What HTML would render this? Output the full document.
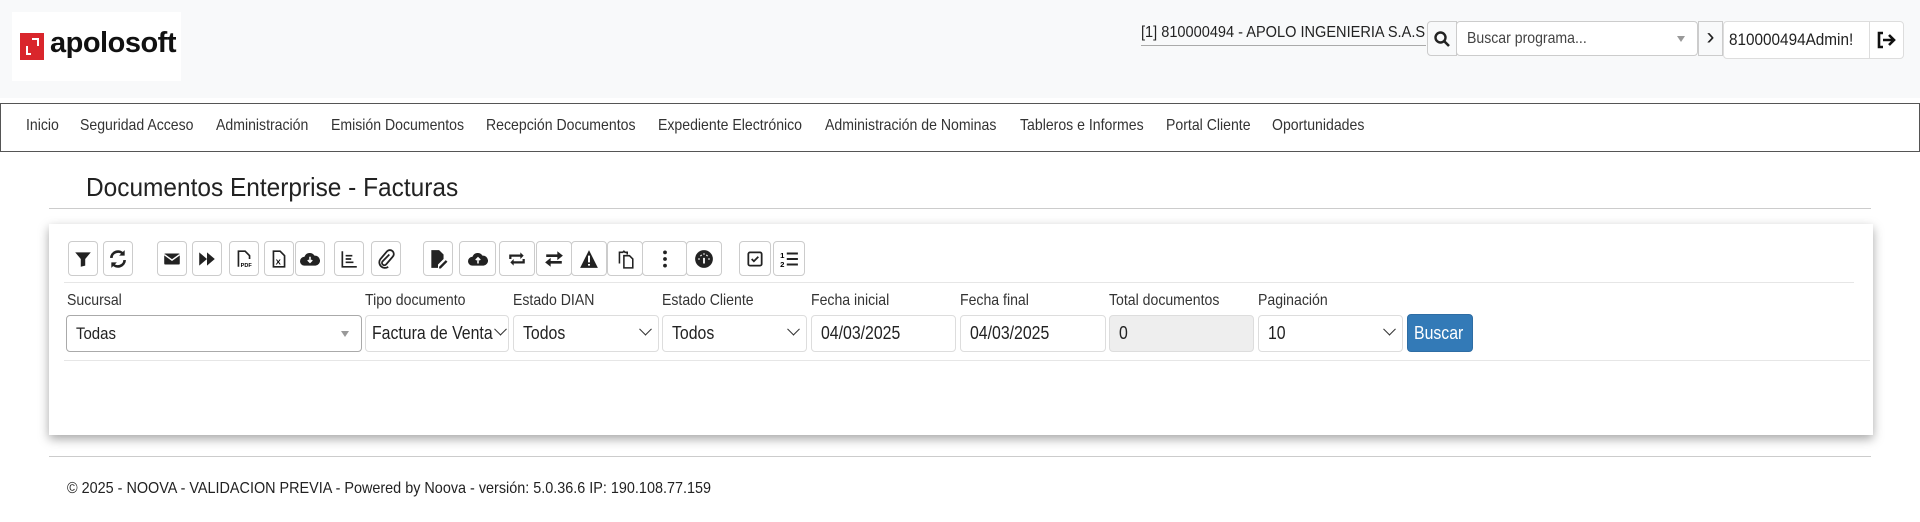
<!DOCTYPE html>
<html><head><meta charset="utf-8"><style>
*{box-sizing:border-box;margin:0;padding:0}
body{width:1920px;height:522px;background:#fff;font-family:"Liberation Sans",Arial,sans-serif;color:#222;position:relative;overflow:hidden}
.a{position:absolute}
.sx{display:inline-block;transform:scaleX(.88);transform-origin:left center;white-space:nowrap}
#hdr{left:0;top:0;width:1920px;height:98px;background:#f8f9fa}
.btn{position:absolute;top:241px;height:35px;border:1px solid #ccc;border-radius:4px;background:#fff;display:flex;align-items:center;justify-content:center}
.btn svg{width:20px;height:20px}
.lbl{position:absolute;top:292px;font-size:16px;color:#333}
.inp{position:absolute;top:315px;height:37px;border:1px solid #ddd;border-radius:4px;background:#fff;font-size:18px;padding-left:9px;line-height:35px;color:#222}
.chev{position:absolute;right:8px;top:13px;width:9px;height:9px;border-right:1.6px solid #333;border-bottom:1.6px solid #333;transform:rotate(45deg) translate(-3px,-3px)}
.nav{position:absolute;top:117px;font-size:16px;color:#333}
</style></head><body>
<div id="hdr" class="a"></div>
<div class="a" style="left:12px;top:12px;width:169px;height:69px;background:#fff"></div>
<div class="a" style="left:20px;top:33px;width:24px;height:27px;background:#d9262c"></div>
<div class="a" style="left:26px;top:46px;width:5px;height:9px;border-left:2px solid #fff;border-bottom:2px solid #fff"></div>
<div class="a" style="left:32px;top:38px;width:7px;height:8px;border-top:2px solid #fff;border-right:2px solid #fff"></div>
<div class="a" style="left:50px;top:27px;font-size:29px;font-weight:bold;color:#111;letter-spacing:-0.5px">apolosoft</div>

<div class="a" style="left:1141px;top:24px;font-size:16px;color:#222;border-bottom:1px solid #aaa;padding-bottom:3px;width:285px"><span class="sx" style="transform:scaleX(.91)">[1] 810000494 - APOLO INGENIERIA S.A.S</span></div>
<div class="a" style="left:1427px;top:21px;width:30px;height:35px;border:1px solid #ccc;border-radius:4px 0 0 4px;background:#f8f9fa;display:flex;align-items:center;justify-content:center"><svg width="18" height="18" viewBox="0 0 18 18"><circle cx="7.5" cy="7.5" r="5" fill="none" stroke="#222" stroke-width="2.4"/><line x1="11" y1="11" x2="16" y2="16" stroke="#222" stroke-width="2.6"/></svg></div>
<div class="a" style="left:1456px;top:21px;width:242px;height:35px;border:1px solid #ccc;border-radius:4px;background:#fff;font-size:16px;line-height:33px;padding-left:10px;color:#444"><span class="sx">Buscar programa...</span><span class="a" style="right:12px;top:14px;border-left:4px solid transparent;border-right:4px solid transparent;border-top:6px solid #999"></span></div>
<div class="a" style="left:1698px;top:21px;width:25px;height:35px;border:1px solid #ccc;background:#f8f9fa;font-size:24px;line-height:30px;text-align:center;color:#222">&#x203A;</div>
<div class="a" style="left:1723px;top:21px;width:147px;height:38px;border:1px solid #ddd;border-radius:4px 0 0 4px;background:#fff;font-size:17px;line-height:36px;padding-left:5px"><span class="sx" style="transform:scaleX(.9)">810000494Admin!</span></div>
<div class="a" style="left:1869px;top:21px;width:35px;height:38px;border:1px solid #ddd;border-radius:0 4px 4px 0;background:#fff;display:flex;align-items:center;justify-content:center"><svg width="20" height="18" viewBox="0 0 20 18"><path d="M6 2H2v14h4" fill="none" stroke="#111" stroke-width="2.6"/><path d="M6 9h10M12 4l5 5-5 5" fill="none" stroke="#111" stroke-width="2.6"/></svg></div>

<div class="a" style="left:0;top:103px;width:1920px;height:49px;border:1px solid #555;background:#fff"></div>
<span class="nav" style="left:26px"><span class="sx">Inicio</span></span>
<span class="nav" style="left:80px"><span class="sx">Seguridad Acceso</span></span>
<span class="nav" style="left:216px"><span class="sx">Administración</span></span>
<span class="nav" style="left:331px"><span class="sx">Emisión Documentos</span></span>
<span class="nav" style="left:486px"><span class="sx">Recepción Documentos</span></span>
<span class="nav" style="left:658px"><span class="sx">Expediente Electrónico</span></span>
<span class="nav" style="left:825px"><span class="sx">Administración de Nominas</span></span>
<span class="nav" style="left:1020px"><span class="sx">Tableros e Informes</span></span>
<span class="nav" style="left:1166px"><span class="sx">Portal Cliente</span></span>
<span class="nav" style="left:1272px"><span class="sx">Oportunidades</span></span>

<div class="a" style="left:86px;top:172px;font-size:26px;color:#222"><span class="sx" style="transform:scaleX(.94)">Documentos Enterprise - Facturas</span></div>
<div class="a" style="left:49px;top:208px;width:1822px;height:1px;background:#ccc"></div>

<div class="a" style="left:49px;top:224px;width:1824px;height:211px;background:#fff;box-shadow:0 4px 10px rgba(0,0,0,.35)"></div>
<div class="a" style="left:64px;top:282px;width:1790px;height:1px;background:#e6e6e6"></div>
<div class="a" style="left:64px;top:360px;width:1806px;height:1px;background:#e6e6e6"></div>

<div class="btn" style="left:68px;width:30px"><svg viewBox="0 0 18 18"><path d="M2 3h14l-5 6v6l-4 1V9z" fill="#222"/></svg></div>
<div class="btn" style="left:103px;width:30px"><svg viewBox="0 0 18 18"><path d="M3 8a6 6 0 0 1 11-3M15 10a6 6 0 0 1-11 3" fill="none" stroke="#222" stroke-width="2.4"/><path d="M15 1v5h-5zM3 17v-5h5z" fill="#222"/></svg></div>
<div class="btn" style="left:157px;width:30px"><svg viewBox="0 0 18 18"><rect x="2" y="4" width="14" height="10" rx="1" fill="#222"/><path d="M2 5l7 5 7-5" fill="none" stroke="#fff" stroke-width="1.3"/></svg></div>
<div class="btn" style="left:192px;width:30px"><svg viewBox="0 0 18 18"><path d="M2 3l7 6-7 6zM9 3l7 6-7 6z" fill="#222"/></svg></div>
<div class="btn" style="left:229px;width:30px"><svg viewBox="0 0 18 18"><path d="M4 16V2h6l4 4v3" fill="none" stroke="#222" stroke-width="1.5"/><text x="6" y="16" font-size="5" font-family="Liberation Sans" font-weight="bold">PDF</text></svg></div>
<div class="btn" style="left:264px;width:30px"><svg viewBox="0 0 18 18"><path d="M4 16V2h6l4 4v10z" fill="none" stroke="#222" stroke-width="1.5"/><text x="6" y="14" font-size="7" font-family="Liberation Sans" font-weight="bold">X</text></svg></div>
<div class="btn" style="left:295px;width:30px"><svg viewBox="0 0 18 18"><path d="M4 15a4 4 0 0 1 0-8 5 5 0 0 1 9-1 4 4 0 0 1 1 9z" fill="#222"/><path d="M9 7v5M7 10l2 2 2-2" stroke="#fff" fill="none" stroke-width="1.4"/></svg></div>
<div class="btn" style="left:334px;width:30px"><svg viewBox="0 0 18 18"><path d="M3 2v14h13M6 6h6M6 9h5M6 12h7" fill="none" stroke="#222" stroke-width="1.5"/></svg></div>
<div class="btn" style="left:371px;width:30px"><svg viewBox="0 0 18 18"><path d="M12 5l-6 6a2 2 0 0 0 3 3l6-7a3.5 3.5 0 0 0-5-5L4 9a5 5 0 0 0 7 7" fill="none" stroke="#222" stroke-width="1.6"/></svg></div>
<div class="btn" style="left:423px;width:30px"><svg viewBox="0 0 18 18"><path d="M3 1h7l4 4v4l-5 5v3H3z" fill="#222"/><path d="M10 16l6-6 1.5 1.5-6 6H10z" fill="#222"/></svg></div>
<div class="btn" style="left:459px;width:37px"><svg viewBox="0 0 18 18"><path d="M4 15a4 4 0 0 1 0-8 5 5 0 0 1 9-1 4 4 0 0 1 1 9z" fill="#222"/><path d="M9 13V8M7 10l2-2 2 2" stroke="#fff" fill="none" stroke-width="1.4"/></svg></div>
<div class="btn" style="left:499px;width:36px"><svg viewBox="0 0 18 18"><path d="M3 9V6h10M15 9v3H5" fill="none" stroke="#222" stroke-width="2"/><path d="M12 3l3 3-3 3zM6 9l-3 3 3 3z" fill="#222"/></svg></div>
<div class="btn" style="left:536px;width:36px"><svg viewBox="0 0 18 18"><path d="M2 6h11M16 12H5" stroke="#222" stroke-width="2.4"/><path d="M12 2l5 4-5 4zM6 8l-5 4 5 4z" fill="#222"/></svg></div>
<div class="btn" style="left:571px;width:36px"><svg viewBox="0 0 18 18"><path d="M9 1l8 16H1z" fill="#222"/><path d="M9 6v6M9 13.5v1.5" stroke="#fff" stroke-width="1.8"/></svg></div>
<div class="btn" style="left:607px;width:36px"><svg viewBox="0 0 18 18"><path d="M4 13V3h3l1-1 1 1h2v2M8 6h5l3 3v8H8z" fill="none" stroke="#222" stroke-width="1.4"/></svg></div>
<div class="btn" style="left:642px;width:45px"><svg viewBox="0 0 18 18"><circle cx="9" cy="3" r="1.7" fill="#222"/><circle cx="9" cy="9" r="1.7" fill="#222"/><circle cx="9" cy="15" r="1.7" fill="#222"/></svg></div>
<div class="btn" style="left:686px;width:36px"><svg viewBox="0 0 18 18"><circle cx="9" cy="9" r="8" fill="#222"/><path d="M9 4v1M4 9h1M13 9h1M6 5.5l.7.7M12 5.5l-.7.7M9 13V8" stroke="#fff" stroke-width="1.6"/></svg></div>
<div class="btn" style="left:739px;width:32px"><svg viewBox="0 0 18 18"><rect x="3" y="3" width="12" height="12" rx="1.5" fill="none" stroke="#222" stroke-width="1.6"/><path d="M6 9l2 2 4-4" fill="none" stroke="#222" stroke-width="1.6"/></svg></div>
<div class="btn" style="left:773px;width:32px"><svg viewBox="0 0 18 18"><text x="1" y="8" font-size="7" font-family="Liberation Sans" font-weight="bold">1</text><text x="1" y="16" font-size="7" font-family="Liberation Sans" font-weight="bold">2</text><path d="M7 4h10M7 9h10M7 14h10" stroke="#222" stroke-width="1.8"/></svg></div>

<span class="lbl" style="left:67px"><span class="sx">Sucursal</span></span>
<span class="lbl" style="left:365px"><span class="sx">Tipo documento</span></span>
<span class="lbl" style="left:513px"><span class="sx">Estado DIAN</span></span>
<span class="lbl" style="left:662px"><span class="sx">Estado Cliente</span></span>
<span class="lbl" style="left:811px"><span class="sx">Fecha inicial</span></span>
<span class="lbl" style="left:960px"><span class="sx">Fecha final</span></span>
<span class="lbl" style="left:1109px"><span class="sx">Total documentos</span></span>
<span class="lbl" style="left:1258px"><span class="sx">Paginación</span></span>

<div class="inp" style="left:66px;width:296px;border-color:#aaa;font-size:17px"><span class="sx">Todas</span><span class="a" style="right:12px;top:15px;border-left:4px solid transparent;border-right:4px solid transparent;border-top:6px solid #999"></span></div>
<div class="inp" style="left:365px;width:144px;padding-left:6px;overflow:hidden"><span class="sx">Factura de Venta</span><span class="chev" style="right:3px"></span></div>
<div class="inp" style="left:513px;width:146px"><span class="sx">Todos</span><span class="chev"></span></div>
<div class="inp" style="left:662px;width:145px"><span class="sx">Todos</span><span class="chev"></span></div>
<div class="inp" style="left:811px;width:145px"><span class="sx">04/03/2025</span></div>
<div class="inp" style="left:960px;width:146px"><span class="sx">04/03/2025</span></div>
<div class="inp" style="left:1109px;width:145px;background:#eee"><span class="sx">0</span></div>
<div class="inp" style="left:1258px;width:145px"><span class="sx">10</span><span class="chev"></span></div>
<div class="a" style="left:1407px;top:314px;width:66px;height:38px;background:#337ab7;border:1px solid #2e6da4;border-radius:4px;color:#fff;font-size:18px;line-height:36px;padding-left:6px"><span class="sx">Buscar</span></div>

<div class="a" style="left:49px;top:456px;width:1822px;height:1px;background:#ccc"></div>
<div class="a" style="left:67px;top:480px;font-size:16px;color:#222"><span class="sx" style="transform:scaleX(.9)">© 2025 - NOOVA - VALIDACION PREVIA - Powered by Noova - versión: 5.0.36.6 IP: 190.108.77.159</span></div>
</body></html>
